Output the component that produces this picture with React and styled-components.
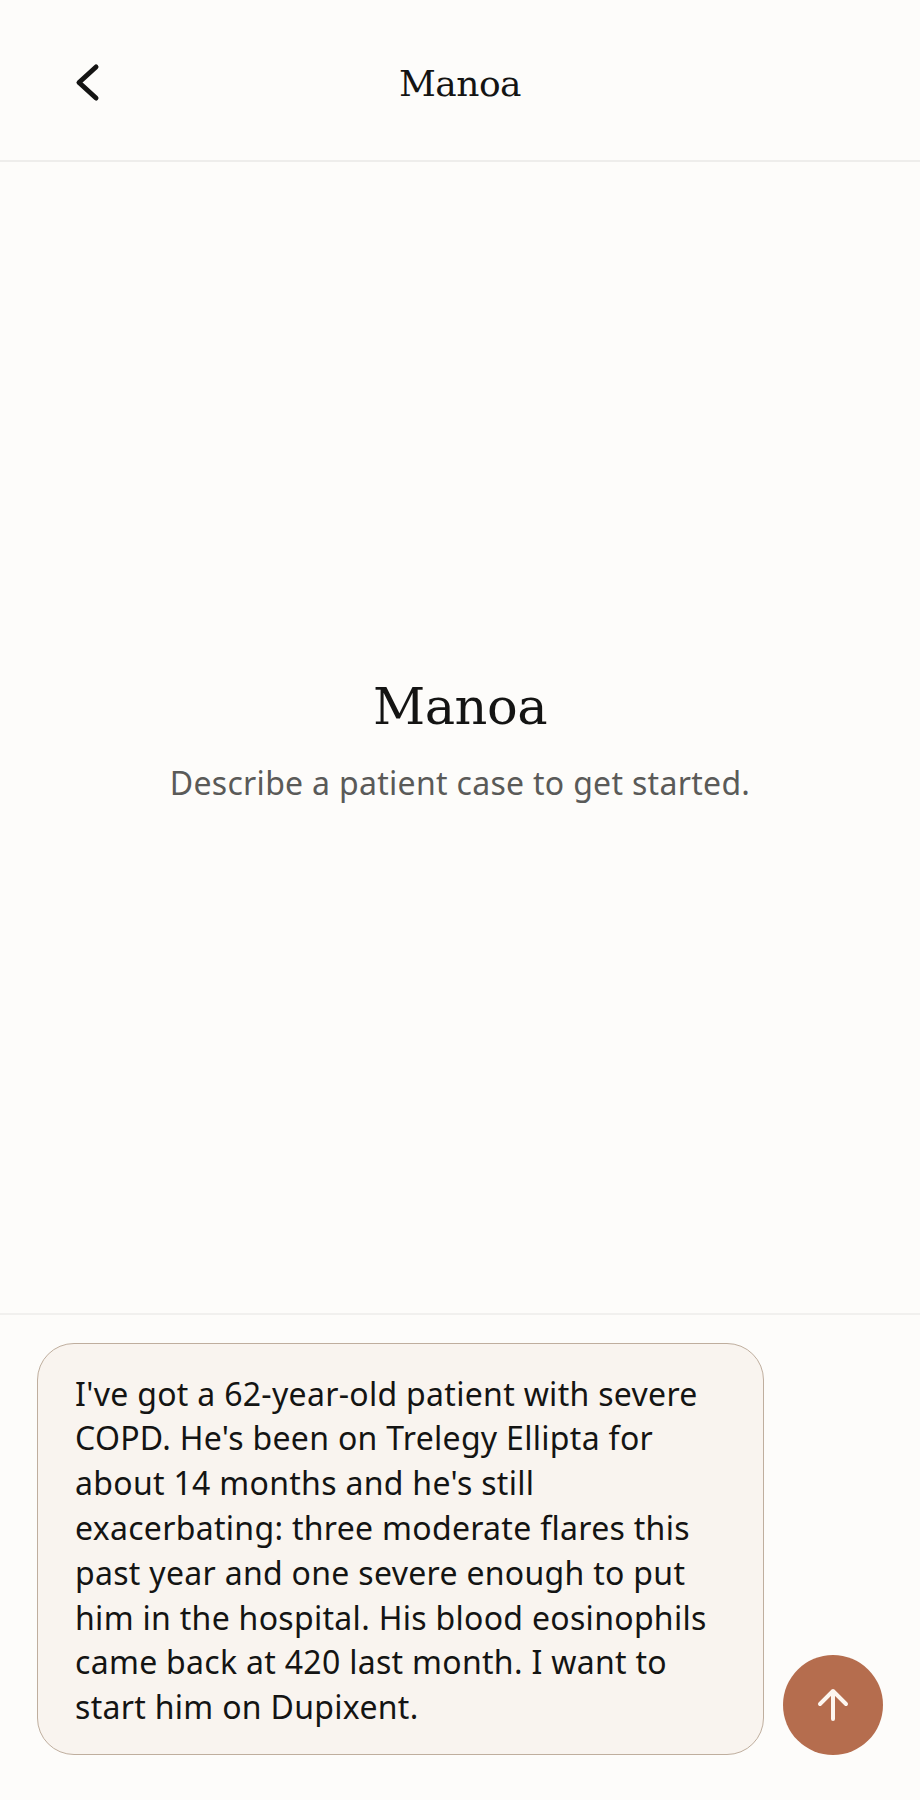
import React from "react";
import styled, { createGlobalStyle } from "styled-components";

const messageLines = [
  "I've got a 62-year-old patient with severe",
  "COPD. He's been on Trelegy Ellipta for",
  "about 14 months and he's still",
  "exacerbating: three moderate flares this",
  "past year and one severe enough to put",
  "him in the hospital. His blood eosinophils",
  "came back at 420 last month. I want to",
  "start him on Dupixent.",
];

const GlobalStyle = createGlobalStyle`
  html, body {
    margin: 0;
    padding: 0;
    background: #fdfcfa;
  }
`;

const Page = styled.div`
  width: 920px;
  height: 1800px;
  display: flex;
  flex-direction: column;
  background: #fdfcfa;
  color: #141413;
  font-family: "Noto Sans", sans-serif;
`;

const Header = styled.header`
  height: 162px;
  box-sizing: border-box;
  flex-shrink: 0;
  display: grid;
  grid-template-columns: 1fr auto 1fr;
  align-items: center;
  padding: 6px 64px 0;
  border-bottom: 2px solid #eeedeb;
`;

const BackButton = styled.button`
  width: 46px;
  height: 46px;
  padding: 0;
  border: none;
  background: none;
  color: #141413;
  display: flex;
  align-items: center;
  justify-content: center;
`;

const HeaderTitle = styled.h1`
  margin: 0;
  font-family: "DejaVu Serif", serif;
  font-size: 36px;
  font-weight: 400;
  letter-spacing: -0.5px;
`;

const Main = styled.main`
  flex: 1;
  display: flex;
  flex-direction: column;
  align-items: center;
  justify-content: center;
  gap: 21px;
  padding-top: 4px;
`;

const HeroTitle = styled.h2`
  margin: 0;
  font-family: "DejaVu Serif", serif;
  font-size: 51px;
  font-weight: 400;
  line-height: 66px;
  letter-spacing: -0.5px;
`;

const HeroText = styled.p`
  margin: 0;
  font-size: 32px;
  line-height: 44px;
  letter-spacing: 0.3px;
  color: #5a5a58;
`;

const Composer = styled.footer`
  flex-shrink: 0;
  display: flex;
  align-items: flex-end;
  gap: 19px;
  padding: 28px 37px 45px;
  border-top: 2px solid #f1f0ee;
`;

const InputBox = styled.div`
  width: 728px;
  box-sizing: border-box;
  padding: 28px 37px 24px;
  border: 1px solid #bfae9e;
  border-radius: 37px;
  background: #f9f4ef;
  font-size: 32px;
  line-height: 44.8px;
  letter-spacing: 0.3px;
`;

const Line = styled.span`
  display: block;
  white-space: nowrap;
`;

const SendButton = styled.button`
  width: 100px;
  height: 100px;
  flex-shrink: 0;
  padding: 0;
  border: none;
  border-radius: 50%;
  background: #b56d4e;
  color: #fdf6f0;
  display: flex;
  align-items: center;
  justify-content: center;
`;

const App = () => (
  <Page>
    <GlobalStyle />
    <Header>
      <BackButton aria-label="Back">
        <svg width="46" height="46" viewBox="0 0 46 46" fill="none" stroke="currentColor" strokeWidth="5" strokeLinecap="round" strokeLinejoin="round">
          <path d="M32 7 L15 22.5 L32 38" />
        </svg>
      </BackButton>
      <HeaderTitle>Manoa</HeaderTitle>
    </Header>
    <Main>
      <HeroTitle>Manoa</HeroTitle>
      <HeroText>Describe a patient case to get started.</HeroText>
    </Main>
    <Composer>
      <InputBox>
        {messageLines.map((line) => (
          <Line key={line}>{line}</Line>
        ))}
      </InputBox>
      <SendButton aria-label="Send">
        <svg width="36" height="36" viewBox="0 0 36 36" fill="none" stroke="currentColor" strokeWidth="4" strokeLinecap="round" strokeLinejoin="round">
          <path d="M18 32 V4 M5 17 L18 4 L31 17" />
        </svg>
      </SendButton>
    </Composer>
  </Page>
);

export default App;
